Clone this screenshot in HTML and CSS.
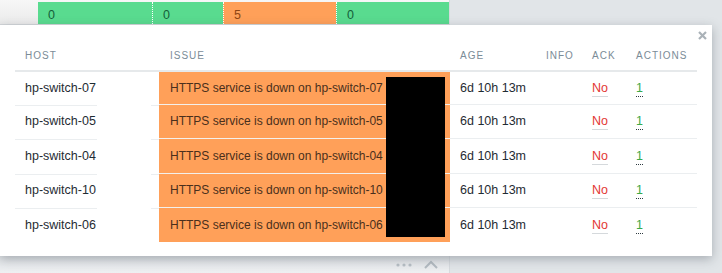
FILE: index.html
```html
<!DOCTYPE html>
<html>
<head>
<meta charset="utf-8">
<link rel="stylesheet" href="styles.css">
</head>
<body>
<div class="stage">
  <div class="widget">
    <div class="strip">
      <div class="cell ok">0</div>
      <div class="cell ok sep">0</div>
      <div class="cell avg sep">5</div>
      <div class="cell ok sep">0</div>
    </div>
    <div class="widget-body"></div>
    <div class="widget-foot">
      <svg class="dots" width="16" height="4" viewBox="0 0 16 4"><circle cx="2" cy="2" r="1.6"/><circle cx="8" cy="2" r="1.6"/><circle cx="14" cy="2" r="1.6"/></svg>
      <svg class="chev" width="14" height="9" viewBox="0 0 14 9"><path d="M1 8 L7 2 L13 8" fill="none" stroke="#b3bbc1" stroke-width="2"/></svg>
    </div>
  </div>

  <div class="popup">
    <svg class="close" width="9" height="9" viewBox="0 0 9 9"><path d="M1 1 L8 8 M8 1 L1 8" stroke="#aab2b8" stroke-width="2.2"/></svg>
    <table class="problems">
      <thead>
        <tr>
          <th class="c-host">Host</th>
          <th class="c-issue">Issue</th>
          <th class="c-age">Age</th>
          <th class="c-info">Info</th>
          <th class="c-ack">Ack</th>
          <th class="c-act">Actions</th>
        </tr>
      </thead>
      <tbody>
        <tr>
          <td class="c-host">hp-switch-07</td>
          <td class="c-issue sev">HTTPS service is down on hp-switch-07</td>
          <td class="c-age">6d 10h 13m</td>
          <td class="c-info"></td>
          <td class="c-ack"><span class="no">No</span></td>
          <td class="c-act"><span class="act">1</span></td>
        </tr>
        <tr>
          <td class="c-host">hp-switch-05</td>
          <td class="c-issue sev">HTTPS service is down on hp-switch-05</td>
          <td class="c-age">6d 10h 13m</td>
          <td class="c-info"></td>
          <td class="c-ack"><span class="no">No</span></td>
          <td class="c-act"><span class="act">1</span></td>
        </tr>
        <tr>
          <td class="c-host">hp-switch-04</td>
          <td class="c-issue sev">HTTPS service is down on hp-switch-04</td>
          <td class="c-age">6d 10h 13m</td>
          <td class="c-info"></td>
          <td class="c-ack"><span class="no">No</span></td>
          <td class="c-act"><span class="act">1</span></td>
        </tr>
        <tr>
          <td class="c-host">hp-switch-10</td>
          <td class="c-issue sev">HTTPS service is down on hp-switch-10</td>
          <td class="c-age">6d 10h 13m</td>
          <td class="c-info"></td>
          <td class="c-ack"><span class="no">No</span></td>
          <td class="c-act"><span class="act">1</span></td>
        </tr>
        <tr>
          <td class="c-host">hp-switch-06</td>
          <td class="c-issue sev">HTTPS service is down on hp-switch-06</td>
          <td class="c-age">6d 10h 13m</td>
          <td class="c-info"></td>
          <td class="c-ack"><span class="no">No</span></td>
          <td class="c-act"><span class="act">1</span></td>
        </tr>
      </tbody>
    </table>
    <div class="redact"></div>
  </div>
</div>
</body>
</html>
```

FILE: styles.css
```css
html, body {
  margin: 0;
  padding: 0;
}
body {
  background: #e1e5e8;
  font-family: "Liberation Sans", Arial, sans-serif;
  font-size: 12.5px;
  color: #1f2c33;
  overflow: hidden;
}
.stage {
  position: relative;
  width: 722px;
  height: 273px;
}
.widget {
  width: 449px;
  height: 273px;
  display: flex;
  flex-direction: column;
  background: #ffffff;
  border-right: 1px solid #d6dade;
}
.strip {
  display: flex;
  height: 22px;
  padding: 2px 0 0 38px;
  border-bottom: 1px solid #d4d7da;
  background: linear-gradient(#f7f7f7, #ebebeb);
}
.cell {
  height: 22px;
  line-height: 26px;
  padding-left: 10px;
  box-sizing: border-box;
}
.cell:nth-child(1) { width: 114px; }
.cell:nth-child(2) { width: 71px; }
.cell:nth-child(3) { width: 113px; }
.cell:nth-child(4) { width: 113px; }
.cell.sep { border-left: 1px dotted #ffffff; }
.ok { background: #59db8f; color: #15603a; }
.avg { background: #ffa059; color: #8f4614; }
.widget-body { flex: 1; }
.widget-foot {
  height: 17px;
  display: flex;
  align-items: center;
  justify-content: flex-end;
  gap: 12px;
  padding-right: 11px;
  background: linear-gradient(#dfe2e5, #eef0f2);
}
.dots { fill: #b7bfc5; }
.popup {
  position: absolute;
  left: 0;
  top: 25px;
  width: 712px;
  height: 231px;
  box-sizing: border-box;
  padding: 15px 15px 0 15px;
  background: #ffffff;
  box-shadow: 0 3px 10px rgba(60, 70, 80, 0.35);
}
.close {
  position: absolute;
  right: 5px;
  top: 6px;
}
.problems {
  width: 682px;
  border-collapse: collapse;
  table-layout: fixed;
}
.problems th {
  height: 31px;
  padding: 0 10px;
  text-align: left;
  font-weight: normal;
  font-size: 10px;
  letter-spacing: 1px;
  text-transform: uppercase;
  color: #7b8c97;
  border-bottom: 2px solid #e6e9eb;
  box-sizing: border-box;
}
.problems td {
  height: 34.5px;
  padding: 0 10px;
  box-sizing: border-box;
  border-top: 1px solid #ebeef0;
  white-space: nowrap;
  overflow: hidden;
}
.problems tbody tr:first-child td { border-top: none; height: 33px; }
.problems td.c-host {
  border-top-color: transparent;
  background-image: linear-gradient(to right, #ebeef0 0 82px, transparent 82px 136px, #ebeef0 136px);
  background-size: 100% 1px;
  background-repeat: no-repeat;
  background-position: 0 0;
}
.problems tbody tr:first-child td.c-host { background-image: none; }
.c-host { width: 144px; }
.c-issue { width: 291px; }
.problems .c-issue { padding-left: 11px; }
.c-age { width: 86px; }
.c-info { width: 46px; }
.c-ack { width: 44px; }
.c-act { width: 71px; }
.problems td.sev {
  background: #ffa059;
  color: #4a2f1c;
  font-size: 12px;
  border-top-color: #f3f0ec;
}
.no {
  color: #e33734;
  border-bottom: 1px solid #d5d9dc;
  padding-bottom: 1px;
}
.act {
  color: #3aa94a;
  border-bottom: 1px dotted #2d3a40;
  padding-bottom: 1px;
}
.redact {
  position: absolute;
  left: 386px;
  top: 52px;
  width: 59px;
  height: 160px;
  background: #000000;
}
```
